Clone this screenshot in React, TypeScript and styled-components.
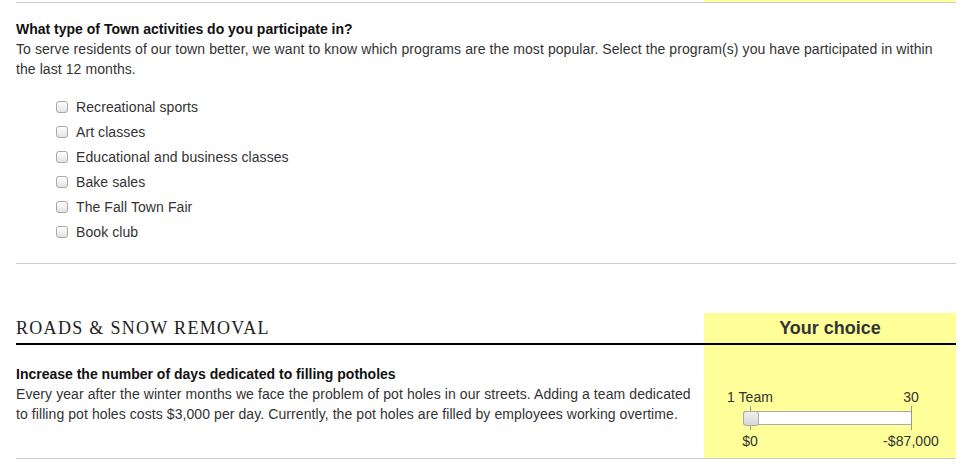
import React from "react";
import styled, { createGlobalStyle } from "styled-components";

const GlobalStyle = createGlobalStyle`
  html, body { margin: 0; padding: 0; background: #fff; }
  * { box-sizing: border-box; }
`;

const YELLOW = "#ffff99";

const Page = styled.div`
  width: 940px;
  margin: 0 16px;
  font-family: "Liberation Sans", Arial, Helvetica, sans-serif;
  font-size: 14px;
  line-height: 20px;
  letter-spacing: 0.08px;
  color: #333;
`;

const Columns = styled.div<{ $border?: string }>`
  display: grid;
  grid-template-columns: 688px 252px;
  border-bottom: ${(p) => p.$border ?? "1px solid #ccc"};
`;

const TopStrip = styled(Columns)`
  height: 3px;
`;

const YellowCell = styled.div`
  background: ${YELLOW};
`;

const QuestionBlock = styled.div`
  padding: 16px 0 19px;
  border-bottom: 1px solid #ccc;
`;

const Title = styled.div`
  font-weight: bold;
  color: #111;
  letter-spacing: 0;
`;

const Desc = styled.p`
  margin: 0;
`;

const Options = styled.ul`
  list-style: none;
  margin: 15px 0 0;
  padding: 0 0 0 40px;
`;

const Option = styled.li`
  height: 25px;
  display: flex;
  align-items: center;
  gap: 8px;
`;

const Check = styled.input.attrs({ type: "checkbox" })`
  appearance: none;
  -webkit-appearance: none;
  width: 12px;
  height: 12px;
  margin: 0;
  border: 1px solid #a9a9a9;
  border-radius: 3px;
  background: linear-gradient(#ffffff, #e2e2e2);
`;

const Section = styled.section`
  margin-top: 49px;
`;

const HeaderRow = styled(Columns)`
  height: 32px;
`;

const SectionTitle = styled.h2`
  margin: 0;
  display: flex;
  align-items: center;
  font-family: "Liberation Serif", "Times New Roman", serif;
  font-weight: normal;
  font-size: 18px;
  letter-spacing: 1.3px;
  text-transform: uppercase;
  color: #222;
`;

const ChoiceHead = styled(YellowCell)`
  display: flex;
  align-items: center;
  justify-content: center;
  font-weight: bold;
  font-size: 18px;
  letter-spacing: 0;
  color: #333;
`;

const LeftCell = styled.div`
  padding: 19px 4px 0 0;
`;

const SliderCell = styled(YellowCell)`
  padding: 42px 0 7px 39px;
`;

const Slider = styled.div`
  width: 169px;
`;

const Scale = styled.div<{ $gap?: number }>`
  display: flex;
  justify-content: space-between;
  padding: 0 1px 0 7px;
  margin-top: ${(p) => p.$gap ?? 0}px;
  color: #333;
`;

const Mark = styled.span`
  width: 0;
  display: flex;
  justify-content: center;
  white-space: nowrap;
`;

const Track = styled.div`
  position: relative;
  height: 14px;
  margin-top: 4px;
  border: 1px solid #aaa;
  border-radius: 2px;
  background: #fff;

  &::before,
  &::after {
    content: "";
    position: absolute;
    top: -6px;
    bottom: -6px;
    width: 1px;
    background: #999;
  }
  &::before {
    left: 6px;
  }
  &::after {
    right: -1px;
  }
`;

const Handle = styled.div`
  position: absolute;
  left: -1px;
  top: -1px;
  width: 16px;
  height: 15px;
  z-index: 1;
  border: 1px solid #aaa;
  border-radius: 3px;
  background: linear-gradient(#f0f0f0, #d6d6d6);
`;

const activities = [
  "Recreational sports",
  "Art classes",
  "Educational and business classes",
  "Bake sales",
  "The Fall Town Fair",
  "Book club",
];

export default function App() {
  return (
    <>
      <GlobalStyle />
      <Page>
        <TopStrip>
          <div />
          <YellowCell />
        </TopStrip>

        <QuestionBlock>
          <Title>What type of Town activities do you participate in?</Title>
          <Desc>
            To serve residents of our town better, we want to know which programs are the most
            popular. Select the program(s) you have participated in within the last 12 months.
          </Desc>
          <Options>
            {activities.map((a) => (
              <Option key={a}>
                <Check />
                <span>{a}</span>
              </Option>
            ))}
          </Options>
        </QuestionBlock>

        <Section>
          <HeaderRow $border="2px solid #000">
            <SectionTitle>Roads &amp; Snow Removal</SectionTitle>
            <ChoiceHead>Your choice</ChoiceHead>
          </HeaderRow>
          <Columns>
            <LeftCell>
              <Title>Increase the number of days dedicated to filling potholes</Title>
              <Desc>
                Every year after the winter months we face the problem of pot holes in our streets.
                Adding a team dedicated to filling pot holes costs $3,000 per day. Currently, the
                pot holes are filled by employees working overtime.
              </Desc>
            </LeftCell>
            <SliderCell>
              <Slider>
                <Scale>
                  <Mark>1 Team</Mark>
                  <Mark>30</Mark>
                </Scale>
                <Track>
                  <Handle />
                </Track>
                <Scale $gap={6}>
                  <Mark>$0</Mark>
                  <Mark>-$87,000</Mark>
                </Scale>
              </Slider>
            </SliderCell>
          </Columns>
        </Section>
      </Page>
    </>
  );
}
